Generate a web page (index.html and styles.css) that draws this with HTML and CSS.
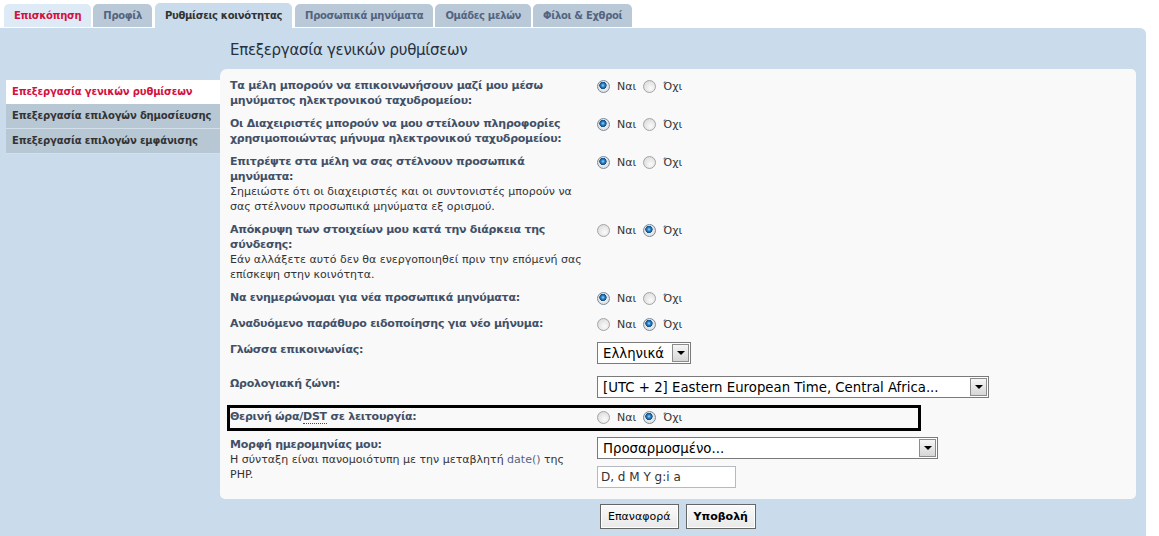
FILE: index.html
```html
<!DOCTYPE html>
<html>
<head>
    <title>Πίνακας ελέγχου χρήστη</title>
    <meta charset="UTF-8">
    <link rel="stylesheet" href="styles.css">
</head>
<body>
    <div class="tabs">
        <div class="tab hover">Επισκόπηση</div>
        <div class="tab">Προφίλ</div>
        <div class="tab active">Ρυθμίσεις κοινότητας</div>
        <div class="tab">Προσωπικά μηνύματα</div>
        <div class="tab">Ομάδες μελών</div>
        <div class="tab">Φίλοι &amp; Εχθροί</div>
    </div>

    <div class="panel">
        <div class="side-menu">
            <div class="menu-item active">Επεξεργασία γενικών ρυθμίσεων</div>
            <div class="menu-item">Επεξεργασία επιλογών δημοσίευσης</div>
            <div class="menu-item">Επεξεργασία επιλογών εμφάνισης</div>
        </div>

        <div class="main">
            <h2>Επεξεργασία γενικών ρυθμίσεων</h2>

            <div class="content">
                <dl class="row">
                    <dt><label>Τα μέλη μπορούν να επικοινωνήσουν μαζί μου μέσω μηνύματος ηλεκτρονικού ταχυδρομείου:</label></dt>
                    <dd class="radios">
                        <input type="radio" name="viewemail" checked> <span>Ναι</span>
                        <input type="radio" name="viewemail"> <span>Όχι</span>
                    </dd>
                </dl>
                <dl class="row">
                    <dt><label>Οι Διαχειριστές μπορούν να μου στείλουν πληροφορίες χρησιμοποιώντας μήνυμα ηλεκτρονικού ταχυδρομείου:</label></dt>
                    <dd class="radios">
                        <input type="radio" name="massemail" checked> <span>Ναι</span>
                        <input type="radio" name="massemail"> <span>Όχι</span>
                    </dd>
                </dl>
                <dl class="row">
                    <dt>
                        <label>Επιτρέψτε στα μέλη να σας στέλνουν προσωπικά μηνύματα:</label>
                        <span class="explain">Σημειώστε ότι οι διαχειριστές και οι συντονιστές μπορούν να σας στέλνουν προσωπικά μηνύματα εξ ορισμού.</span>
                    </dt>
                    <dd class="radios">
                        <input type="radio" name="allowpm" checked> <span>Ναι</span>
                        <input type="radio" name="allowpm"> <span>Όχι</span>
                    </dd>
                </dl>
                <dl class="row">
                    <dt>
                        <label>Απόκρυψη των στοιχείων μου κατά την διάρκεια της σύνδεσης:</label>
                        <span class="explain">Εάν αλλάξετε αυτό δεν θα ενεργοποιηθεί πριν την επόμενή σας επίσκεψη στην κοινότητα.</span>
                    </dt>
                    <dd class="radios">
                        <input type="radio" name="hideonline"> <span>Ναι</span>
                        <input type="radio" name="hideonline" checked> <span>Όχι</span>
                    </dd>
                </dl>
                <dl class="row">
                    <dt><label>Να ενημερώνομαι για νέα προσωπικά μηνύματα:</label></dt>
                    <dd class="radios">
                        <input type="radio" name="notifypm" checked> <span>Ναι</span>
                        <input type="radio" name="notifypm"> <span>Όχι</span>
                    </dd>
                </dl>
                <dl class="row">
                    <dt><label>Αναδυόμενο παράθυρο ειδοποίησης για νέο μήνυμα:</label></dt>
                    <dd class="radios">
                        <input type="radio" name="popuppm"> <span>Ναι</span>
                        <input type="radio" name="popuppm" checked> <span>Όχι</span>
                    </dd>
                </dl>
                <dl class="row">
                    <dt><label>Γλώσσα επικοινωνίας:</label></dt>
                    <dd>
                        <div class="select lang">
                            <span class="select-text">Ελληνικά</span>
                            <span class="select-btn"><span class="arrow"></span></span>
                        </div>
                    </dd>
                </dl>
                <dl class="row">
                    <dt><label>Ωρολογιακή ζώνη:</label></dt>
                    <dd>
                        <div class="select tz">
                            <span class="select-text">[UTC + 2] Eastern European Time, Central Africa...</span>
                            <span class="select-btn"><span class="arrow"></span></span>
                        </div>
                    </dd>
                </dl>
                <dl class="row highlight">
                    <dt><label>Θερινή ώρα/<abbr title="Daylight Saving Time">DST</abbr> σε λειτουργία:</label></dt>
                    <dd class="radios">
                        <input type="radio" name="dst"> <span>Ναι</span>
                        <input type="radio" name="dst" checked> <span>Όχι</span>
                    </dd>
                </dl>
                <dl class="row last">
                    <dt>
                        <label>Μορφή ημερομηνίας μου:</label>
                        <span class="explain">Η σύνταξη είναι πανομοιότυπη με την μεταβλητή <span class="code">date()</span> της PHP.</span>
                    </dt>
                    <dd>
                        <div class="select dateformat">
                            <span class="select-text">Προσαρμοσμένο...</span>
                            <span class="select-btn"><span class="arrow"></span></span>
                        </div>
                        <input class="inputbox" type="text" value="D, d M Y g:i a">
                    </dd>
                </dl>
            </div>

            <div class="submit-buttons">
                <button class="button2">Επαναφορά</button>
                <button class="button1">Υποβολή</button>
            </div>
        </div>
    </div>
</body>
</html>
```

FILE: styles.css
```css
:root {
    --panel-bg: #cadceb;
    --content-bg: #f9f9f9;
    --tab-bg: #b9c9d7;
    --label: #425067;
    --text: #333;
    --red: #d31141;
}

* {
    margin: 0;
    padding: 0;
    box-sizing: border-box;
    font-family: 'DejaVu Sans', Verdana, sans-serif;
}

body {
    background: #fff;
    color: var(--text);
    font-size: 11px;
    height: 100vh;
    overflow: hidden;
}

/* tabs */
.tabs {
    display: flex;
    align-items: flex-end;
    gap: 2px;
    height: 28px;
    padding-left: 4px;
    width: 1146px;
}

.tab {
    height: 23px;
    margin-bottom: 1px;
    padding: 0 10px;
    line-height: 23px;
    font-size: 10px;
    font-weight: bold;
    letter-spacing: -0.3px;
    color: #536482;
    background: var(--tab-bg);
    border-radius: 5px 5px 0 0;
    white-space: nowrap;
}

.tab.hover {
    background: #deeaf5;
    color: var(--red);
}

.tab.active {
    height: 26px;
    margin-bottom: 0;
    line-height: 25px;
    color: var(--text);
    background: var(--panel-bg);
    border: 1px solid #fff;
    border-bottom: none;
    border-radius: 6px 6px 0 0;
}

/* main panel */
.panel {
    display: flex;
    width: 1146px;
    height: 508px;
    background: var(--panel-bg);
    border-radius: 0 6px 0 0;
}

.side-menu {
    width: 214px;
    margin: 52px 0 0 6px;
}

.menu-item {
    height: 25px;
    padding-left: 6px;
    line-height: 24px;
    font-size: 10px;
    font-weight: bold;
    letter-spacing: -0.15px;
    color: var(--text);
    background: #b8c7d4;
    border-bottom: 1px solid #d3e0eb;
    white-space: nowrap;
}

.menu-item.active {
    height: 24px;
    background: #fff;
    color: var(--red);
    border-bottom: none;
}

.main {
    width: 916px;
}

.main h2 {
    padding: 12px 10px 0;
    margin-bottom: 9px;
    font-size: 15px;
    font-weight: normal;
    letter-spacing: -0.3px;
    line-height: 20px;
    color: #28313f;
}

.content {
    background: var(--content-bg);
    border-radius: 7px 5px 5px 5px;
    padding: 5px 10px 7px;
}

/* form rows */
.row {
    display: flex;
    padding: 4px 0;
    line-height: 15px;
}

.row.last {
    margin-top: 2px;
}

.row dt {
    width: 360px;
    margin-right: 7px;
}

.row dt label {
    display: block;
    max-width: 354px;
    font-weight: bold;
    letter-spacing: -0.25px;
    color: var(--label);
}

.explain {
    display: block;
    color: var(--text);
}

.explain .code {
    display: inline;
    color: #536482;
}

abbr {
    text-decoration: none;
    border-bottom: 1px dotted var(--label);
}

.row dd {
    flex: 1;
}

.radios {
    display: flex;
    align-items: center;
    height: 15px;
    margin-top: 1px;
    margin-bottom: 2px;
    color: var(--text);
}

.radios span {
    margin-right: 7px;
}

input[type=radio] {
    appearance: none;
    -webkit-appearance: none;
    width: 13px;
    height: 13px;
    margin-right: 7px;
    border: 1px solid #a4a4a4;
    border-radius: 50%;
    background: radial-gradient(circle at 60% 65%, #fafafa 0, #e4e4e4 60%, #d2d2d2 100%);
}

input[type=radio]:checked {
    border-color: #7a8a99;
    background:
        radial-gradient(circle at 45% 40%, #9fdcff 0, #2f86c8 1.6px, #0e4d8a 3.4px, transparent 3.9px),
        radial-gradient(circle, #f4f4f4 0, #dadada 100%);
}

.row.highlight {
    width: 694px;
    margin-left: -3px;
    padding: 1px 0;
    border: 3px solid #000;
}

/* selects */
.select {
    display: flex;
    align-items: center;
    height: 22px;
    margin-bottom: 4px;
    padding: 1px;
    background: #fff;
    border: 1px solid #7a7a7a;
    font-size: 13.3px;
    color: #000;
}

.select-text {
    flex: 1;
    padding-left: 4px;
    white-space: nowrap;
    overflow: hidden;
}

.select-btn {
    display: flex;
    align-items: center;
    justify-content: center;
    width: 17px;
    height: 18px;
    border: 1px solid #8c8c8c;
    background: linear-gradient(#f6f6f6, #d6d6d6);
}

.arrow {
    width: 0;
    height: 0;
    border-left: 4px solid transparent;
    border-right: 4px solid transparent;
    border-top: 4px solid #000;
}

.select.lang { width: 94px; }
.select.tz { width: 392px; margin-bottom: 3px; }
.select.dateformat { width: 341px; margin-bottom: 7px; }

.inputbox {
    display: block;
    width: 139px;
    height: 22px;
    padding: 0 3px;
    border: 1px solid #b4bac0;
    background: #fff;
    font-size: 12px;
    color: #333;
}

/* buttons */
.submit-buttons {
    display: flex;
    justify-content: center;
    gap: 7px;
    margin-top: 5px;
}

.submit-buttons button {
    height: 25px;
    padding: 0 7px;
    border: 1px solid #666;
    background: linear-gradient(#fafafa, #e9e9e9);
    box-shadow: inset 0 0 0 1px #fff;
    font-size: 11px;
    color: #000;
}

.submit-buttons .button1 {
    font-weight: bold;
}
```
